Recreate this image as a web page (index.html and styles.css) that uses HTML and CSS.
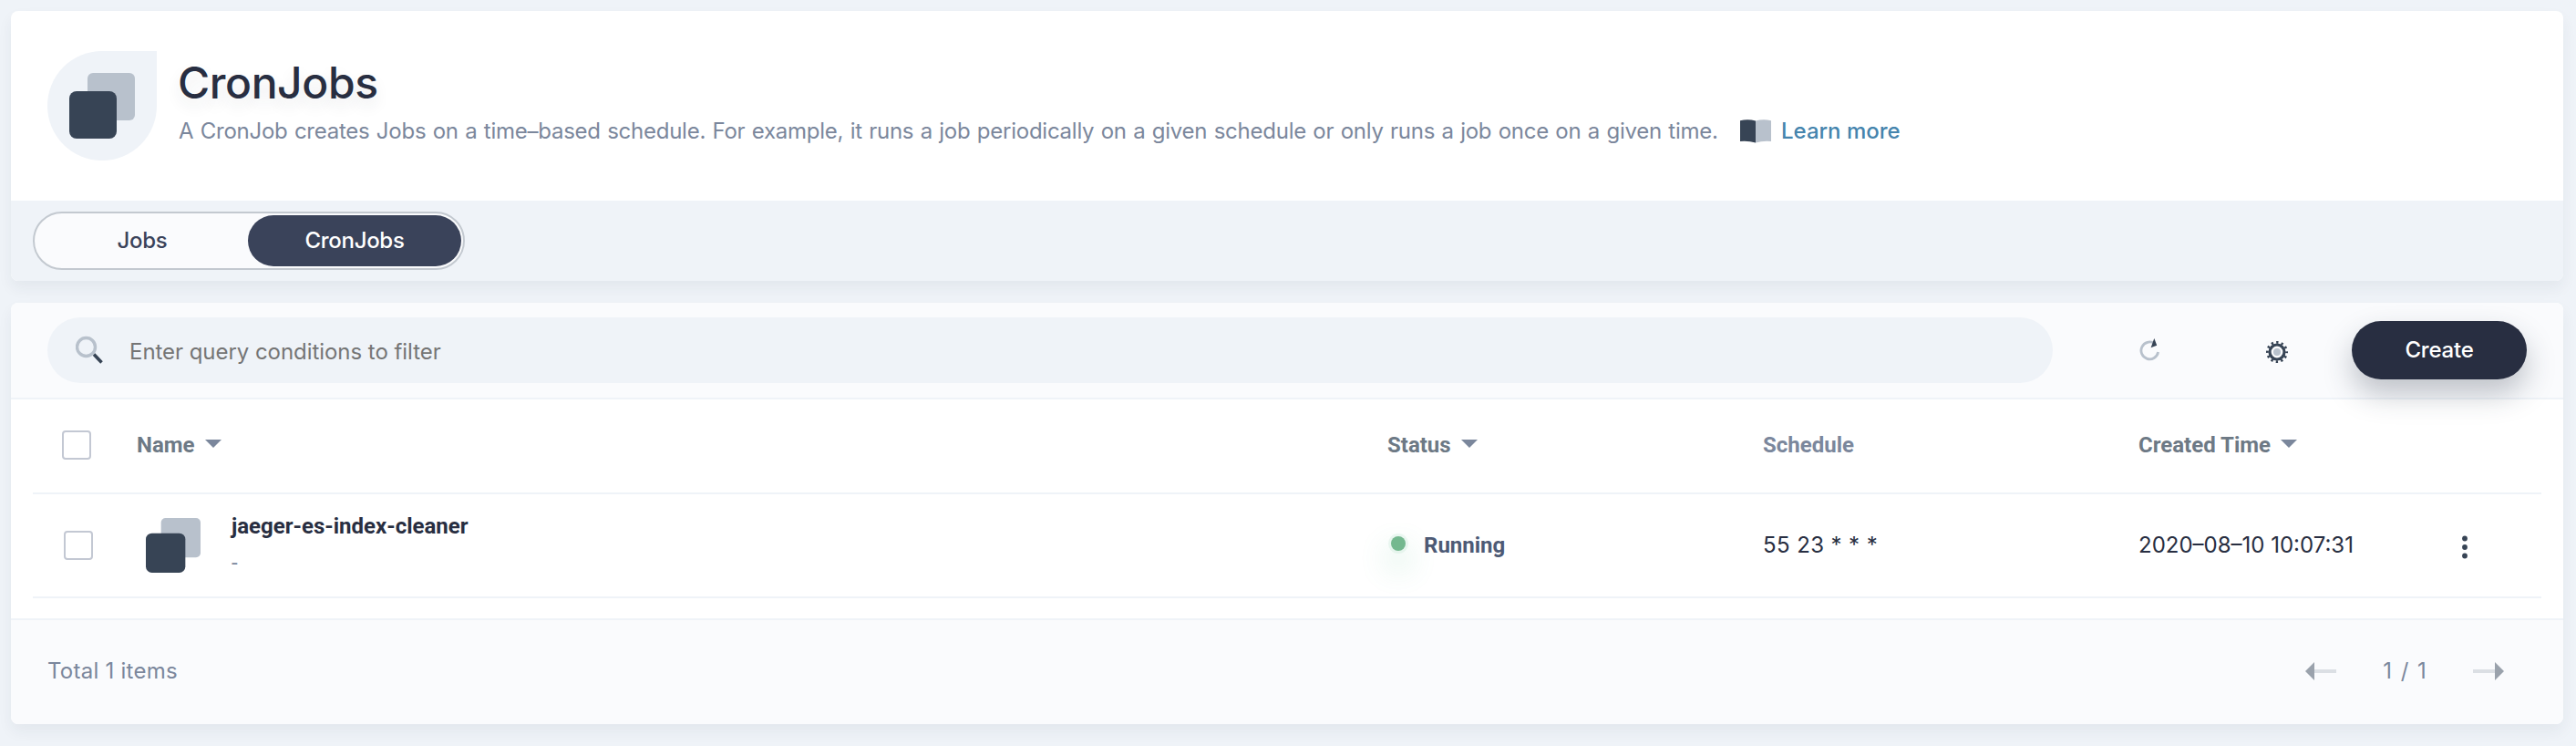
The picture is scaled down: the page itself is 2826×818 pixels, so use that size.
FILE: index.html
```
<!DOCTYPE html>
<html lang="en">
<head>
<meta charset="utf-8">
<title>CronJobs</title>
<link rel="stylesheet" href="styles.css">
</head>
<body>
<header class="card banner">
  <div class="banner-main">
    <div class="banner-icon">
      <svg width="72" height="72" viewBox="0 0 72 72"><rect x="20" width="52" height="52" rx="6" fill="#b8c1cc"/><rect y="20" width="52" height="52" rx="8" fill="#374455"/></svg>
    </div>
    <div class="banner-text">
      <h1 class="title">CronJobs</h1>
      <p class="desc"><span class="desc-text">A CronJob creates Jobs on a time–based schedule. For example, it runs a job periodically on a given schedule or only runs a job once on a given time.</span>
        <a class="learn"><svg width="34" height="26" viewBox="0 0 34 26"><path d="M0 1.2Q9-1 17 1.6V25.4Q9 23.2 0 24Z" fill="#374455"/><path d="M34 1.2Q25-1 17 1.6V25.4Q25 23.2 34 24Z" fill="#b8c1cc"/></svg><span>Learn more</span></a>
      </p>
    </div>
  </div>
  <nav class="banner-nav">
    <div class="tabs"><a class="tab">Jobs</a><a class="tab active">CronJobs</a></div>
  </nav>
</header>

<main class="card">
  <div class="toolbar">
    <div class="search">
      <svg width="32" height="32" viewBox="0 0 32 32"><path d="M20 20.5L28.5 29.5" stroke="#374455" stroke-width="3.6"/><circle cx="11.5" cy="12.5" r="10" fill="none" stroke="#b8c1cc" stroke-width="3.4"/></svg>
      <span class="placeholder">Enter query conditions to filter</span>
    </div>
    <svg class="refresh" width="24" height="26" viewBox="0 0 24 26"><path d="M16.6 5.6A9.4 9.4 0 1 0 20.6 15" fill="none" stroke="#b8c1cc" stroke-width="2.8"/><path d="M16.3 0L19.2 7.8L12.6 10.2Z" fill="#374455"/></svg>
    <svg class="gear" width="24" height="24" viewBox="-12 -12 24 24"><circle r="10.6" fill="none" stroke="#374455" stroke-width="2.8" stroke-dasharray="2.35 3.2" stroke-dashoffset="1.17"/><circle r="8" fill="none" stroke="#374455" stroke-width="3.2"/><circle r="4" fill="#b8c1cc"/></svg>
    <button class="create">Create</button>
  </div>

  <div class="table">
    <div class="row head">
      <i class="check"></i>
      <div class="cell">Name<i class="caret"></i></div>
      <div class="cell">Status<i class="caret"></i></div>
      <div class="cell plain">Schedule</div>
      <div class="cell">Created Time<i class="caret"></i></div>
    </div>
    <div class="row item">
      <i class="check"></i>
      <div class="name-cell">
        <svg width="60" height="60" viewBox="0 0 72 72"><rect x="20" width="52" height="52" rx="6" fill="#b8c1cc"/><rect y="20" width="52" height="52" rx="8" fill="#374455"/></svg>
        <div><div class="name">jaeger-es-index-cleaner</div><div class="sub">-</div></div>
      </div>
      <div class="status"><i class="dot"></i>Running</div>
      <div class="value schedule">55 23 * * *</div>
      <div class="value">2020–08–10 10:07:31</div>
      <svg class="more" width="8" height="26" viewBox="0 0 8 26"><g fill="#374455"><circle cx="4" cy="3.5" r="2.9"/><circle cx="4" cy="13" r="2.9"/><circle cx="4" cy="22.5" r="2.9"/></g></svg>
    </div>
  </div>

  <footer class="foot">
    <span class="total">Total 1 items</span>
    <div class="pager">
      <svg width="34" height="20" viewBox="0 0 34 20"><path d="M10 8H34V12H10Z" fill="#dbdfe4"/><path d="M10 0V20L0 10Z" fill="#9aa2ac"/></svg>
      <span class="page">1 / 1</span>
      <svg width="34" height="20" viewBox="0 0 34 20"><path d="M0 8H24V12H0Z" fill="#dbdfe4"/><path d="M24 0V20L34 10Z" fill="#9aa2ac"/></svg>
    </div>
  </footer>
</main>
</body>
</html>
```
FILE: styles.css
```
* { box-sizing: border-box; }
body {
  margin: 0;
  height: 818px;
  padding: 12px 14px 24px 12px;
  display: flex;
  flex-direction: column;
  gap: 24px;
  overflow: hidden;
  background: #eff3f8;
  font: 24px/32px Inter, "Noto Sans", sans-serif;
  color: #282e41;
}
svg { display: block; flex: none; }
.card {
  background: #fff;
  border-radius: 8px;
  box-shadow: 0 8px 16px rgba(36, 46, 66, 0.06);
}

/* banner */
.banner { height: 296px; }
.banner-main {
  height: 208px;
  padding: 44px 40px;
  display: flex;
  gap: 24px;
}
.banner-icon {
  width: 120px;
  height: 120px;
  display: grid;
  place-items: center;
  border-radius: 60px 0 60px 60px;
  background: #eff3f8;
}
.banner-text { padding-top: 9px; }
.title {
  margin: 0;
  font-size: 48px;
  line-height: 52px;
  font-weight: 500;
  letter-spacing: -0.4px;
  text-indent: -1px;
  text-shadow: 0 8px 16px rgba(35, 45, 65, 0.1);
}
.desc {
  margin: 11px 0 0;
  display: flex;
  align-items: center;
  white-space: nowrap;
  color: #7b879c;
}
.desc-text { width: 1687px; word-spacing: 0.9px; letter-spacing: -0.25px; }
.learn {
  margin-left: 26px;
  display: flex;
  align-items: center;
  gap: 11px;
  font-weight: 500;
  color: #4584ad;
}
.banner-nav {
  height: 88px;
  padding: 12px 24px;
  border-radius: 0 0 8px 8px;
  background: #eff3f8;
}
.tabs {
  width: 474px;
  height: 64px;
  padding: 2px;
  display: flex;
  border: 2px solid #c3c9d0;
  border-radius: 32px;
  background: #fafbfd;
}
.tab {
  width: 232px;
  height: 56px;
  border-radius: 28px;
  text-align: center;
  line-height: 56px;
  font-weight: 500;
  letter-spacing: -0.3px;
  color: #3a435a;
}
.tab.active { flex: 1; background: #3a435a; color: #fff; }

/* toolbar */
.toolbar {
  height: 106px;
  padding: 0 40px;
  display: flex;
  align-items: center;
  border-bottom: 2px solid #eff3f8;
  border-radius: 8px 8px 0 0;
  background: #fafbfd;
}
.search {
  width: 2200px;
  height: 72px;
  padding-left: 31px;
  display: flex;
  align-items: center;
  gap: 27px;
  border-radius: 36px;
  background: #eff3f8;
}
.placeholder { padding-top: 3px; letter-spacing: -0.05px; color: #757575; }
.refresh { margin: 0 0 0 95px; }
.gear { margin: 4px 70px 0 115px; }
.create {
  width: 192px;
  height: 64px;
  padding: 0;
  border: 0;
  border-radius: 32px;
  background: #282e41;
  box-shadow: 0 16px 32px rgba(36, 46, 66, 0.28);
  color: #fff;
  font: 500 24px/62px Inter, sans-serif;
  letter-spacing: -0.2px;
}

/* table */
.table { padding: 0 24px; height: 240px; }
.row {
  display: grid;
  grid-template-columns: 114px 1372px 412px 412px 351px 1fr;
  align-items: center;
  border-bottom: 2px solid #eff3f8;
}
.head { height: 104px; padding-bottom: 2px; }
.item { height: 114px; }
.check {
  width: 32px;
  height: 32px;
  margin-left: 32px;
  border: 2px solid #c3c8d3;
  border-radius: 4px;
}
.item .check { margin-left: 34px; }
.cell {
  display: flex;
  align-items: center;
  font: 700 24px/32px Roboto, sans-serif;
  color: #6d7985;
}
.cell.plain { color: #7b879c; }
.caret {
  margin: 0 0 3px 11px;
  border: 9px solid transparent;
  border-top-color: #7b879c;
  border-bottom: 0;
}
.name-cell { display: flex; align-items: center; padding-left: 10px; }
.name-cell > div { margin-left: 34px; }
.name, .status { font: 700 24px/32px Roboto, sans-serif; }
.name { margin-top: -2px; }
.sub { margin-top: 8px; font: 24px/32px Roboto, sans-serif; color: #7b879c; }
.status { display: flex; align-items: center; color: #4d5a75; }
.dot {
  width: 16px;
  height: 16px;
  margin: 0 20px 4px 4px;
  border-radius: 50%;
  background: #74b88f;
  box-shadow: 0 0 0 3px rgba(85, 188, 138, 0.1), 0 16px 32px 4px rgba(85, 188, 138, 0.24);
}
.schedule { letter-spacing: 0.4px; }
.more { margin-top: 3px; margin-left: 3px; }

/* footer */
.foot {
  height: 116px;
  padding: 0 65px 3px 40px;
  display: flex;
  align-items: center;
  justify-content: space-between;
  border-top: 2px solid #eff3f8;
  border-radius: 0 0 8px 8px;
  background: #fafbfd;
  color: #7b879c;
}
.total { letter-spacing: 0.25px; }
.pager { display: flex; align-items: center; }
.page { width: 150px; text-align: center; word-spacing: 3px; }
```
